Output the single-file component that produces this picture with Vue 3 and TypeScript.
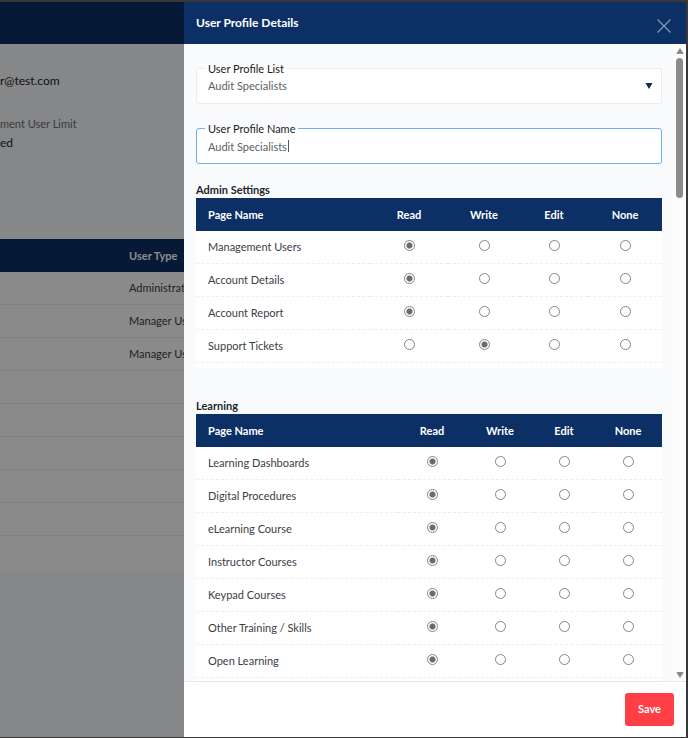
<script setup lang="ts">
import { reactive, ref } from 'vue'

type Access = 'Read' | 'Write' | 'Edit' | 'None'
interface Permission { page: string; access: Access }
interface Section { id: string; title: string; rows: Permission[] }

const levels: Access[] = ['Read', 'Write', 'Edit', 'None']
const profiles: string[] = ['Audit Specialists']
const selectedProfile = ref('Audit Specialists')
const profileName = ref('Audit Specialists')

const userTypes: string[] = ['Administrator', 'Manager User', 'Manager User', '', '', '', '', '', '']

const sections = reactive<Section[]>([
  {
    id: 'admin',
    title: 'Admin Settings',
    rows: [
      { page: 'Management Users', access: 'Read' },
      { page: 'Account Details', access: 'Read' },
      { page: 'Account Report', access: 'Read' },
      { page: 'Support Tickets', access: 'Write' },
    ],
  },
  {
    id: 'learning',
    title: 'Learning',
    rows: [
      { page: 'Learning Dashboards', access: 'Read' },
      { page: 'Digital Procedures', access: 'Read' },
      { page: 'eLearning Course', access: 'Read' },
      { page: 'Instructor Courses', access: 'Read' },
      { page: 'Keypad Courses', access: 'Read' },
      { page: 'Other Training / Skills', access: 'Read' },
      { page: 'Open Learning', access: 'Read' },
    ],
  },
])
</script>

<template>
  <div class="window">
    <main class="page">
      <div class="page-bar"></div>
      <div class="account">
        <p class="value email">r@test.com</p>
        <p class="caption">ment User Limit</p>
        <p class="value">ed</p>
      </div>
      <table class="users">
        <thead>
          <tr><th>User Type</th></tr>
        </thead>
        <tbody>
          <tr v-for="(type, i) in userTypes" :key="i"><td>{{ type }}</td></tr>
        </tbody>
      </table>
    </main>
    <div class="backdrop"></div>

    <aside class="drawer">
      <header class="drawer-head">
        <h1>User Profile Details</h1>
        <button class="close" type="button" aria-label="Close">
          <svg viewBox="0 0 14 14" width="14" height="14"><path d="M.5 .5 13.500 13.500M13.500 .5 .5 13.500" /></svg>
        </button>
      </header>

      <div class="middle">
        <div class="content">
          <div class="field">
            <label for="profile-list">User Profile List</label>
            <select id="profile-list" v-model="selectedProfile">
              <option v-for="p in profiles" :key="p">{{ p }}</option>
            </select>
            <svg class="arrow" viewBox="0 0 8 6" width="8" height="6"><path d="M0.500 0H7.500L4 6Z" /></svg>
          </div>
          <div class="field active">
            <label for="profile-name">User Profile Name</label>
            <input id="profile-name" v-model="profileName" type="text" />
            <span class="caret"></span>
          </div>

          <section v-for="section in sections" :key="section.id" class="group">
            <h2>{{ section.title }}</h2>
            <div class="sheet">
              <table class="perms" :class="section.id">
                <colgroup>
                  <col />
                  <col v-for="level in levels" :key="level" :class="level.toLowerCase()" />
                </colgroup>
                <thead>
                  <tr>
                    <th class="name">Page Name</th>
                    <th v-for="level in levels" :key="level">{{ level }}</th>
                  </tr>
                </thead>
                <tbody>
                  <tr v-for="row in section.rows" :key="row.page">
                    <td class="name">{{ row.page }}</td>
                    <td v-for="level in levels" :key="level">
                      <input
                        v-model="row.access"
                        type="radio"
                        :name="row.page"
                        :value="level"
                        :aria-label="`${row.page}: ${level}`"
                      />
                    </td>
                  </tr>
                </tbody>
              </table>
            </div>
          </section>
        </div>
        <div class="scrollbar" aria-hidden="true">
          <svg viewBox="0 0 8 6" width="8" height="6"><path d="M4 0 7 4.500Q8 6 7 6H1Q0 6 1 4.500Z" /></svg>
          <div class="track"><div class="thumb"></div></div>
          <svg viewBox="0 0 8 6" width="8" height="6"><path d="M4 6 7 1.500Q8 0 7 0H1Q0 0 1 1.500Z" /></svg>
        </div>
      </div>

      <footer class="drawer-foot">
        <button class="save" type="button">Save</button>
      </footer>
    </aside>
  </div>
</template>

<style>
body {
  margin: 0;
  background: #fff;
}
</style>

<style scoped>
* {
  box-sizing: border-box;
}
.window {
  position: relative;
  height: 100vh;
  overflow: hidden;
  border: solid #383838;
  border-width: 2px 2px 1px 0;
  font-family: Lato, "Liberation Sans", sans-serif;
  font-size: 11px;
  line-height: 16px;
  color: #3c4046;
}
h1, h2, p {
  margin: 0;
}
.page {
  height: 100%;
  background: #f8f9fb;
}
.page-bar {
  height: 42px;
  background: #0c3066;
}
.account {
  height: 195px;
  padding-top: 29px;
}
.value {
  font-size: 12px;
  color: #22262c;
}
.email {
  margin-bottom: 27px;
}
.caption {
  margin-bottom: 3px;
  color: #6c7078;
}
table {
  width: 100%;
  border-spacing: 0;
}
th {
  height: 33px;
  padding: 0;
  background: #0c3066;
  color: #fff;
  font-weight: 700;
}
td {
  height: 33px;
  padding: 0;
  text-align: center;
}
.users {
  background: #fff;
}
.users th,
.users td {
  padding-left: 129px;
  text-align: left;
}
.users td {
  border-bottom: 1px solid #eceef1;
}
.users tr:last-child td {
  height: 37px;
  border-bottom: 0;
}
.backdrop {
  position: absolute;
  inset: 0;
  background: rgba(0, 0, 0, 0.46);
}
.drawer {
  position: absolute;
  inset: 0 0 0 auto;
  width: min(100%, 502px);
  display: flex;
  flex-direction: column;
  background: #f9fafc;
}
.drawer-head {
  display: flex;
  justify-content: space-between;
  height: 42px;
  flex: none;
  padding: 12px 15px 0 12px;
  background: #0c3066;
}
h1 {
  font-size: 12px;
  line-height: 18px;
  font-weight: 700;
  color: #fff;
}
.close {
  display: flex;
  align-self: flex-start;
  margin-top: 5px;
  padding: 0;
  border: 0;
  background: none;
}
.close path {
  fill: none;
  stroke: #8598b5;
  stroke-width: 1.2;
}
.middle {
  flex: 1;
  min-height: 0;
  display: flex;
}
.content {
  flex: 1;
  overflow-y: auto;
  scrollbar-width: none;
  padding: 24px 11px 0 12px;
}
.field {
  position: relative;
  height: 36px;
  margin-bottom: 24px;
}
.field.active {
  margin-bottom: 18px;
}
.field label {
  position: absolute;
  top: -7px;
  left: 9px;
  padding: 0 3px;
  background: linear-gradient(#f9fafc 50%, #fff 50%);
  color: #1d2126;
}
.field select,
.field input {
  display: block;
  width: 100%;
  height: 100%;
  margin: 0;
  padding: 0 11px;
  border: 1px solid #eaecf1;
  border-radius: 3px;
  background: #fff;
  color: #5a5e66;
  font: inherit;
  appearance: none;
  outline: 0;
}
.field.active input {
  border-color: #6fb0f5;
}
.arrow {
  position: absolute;
  top: 15px;
  right: 9px;
  fill: #0c2a5c;
  pointer-events: none;
}
.caret {
  position: absolute;
  top: 12px;
  left: 92px;
  width: 1px;
  height: 12px;
  background: #555;
}
.group {
  margin-bottom: 30px;
}
.group h2 {
  height: 16px;
  font-size: 11px;
  line-height: 16px;
  font-weight: 700;
  color: #22262c;
}
.sheet {
  padding-bottom: 5px;
  background: #fff;
}
.perms {
  table-layout: fixed;
}
.perms .name {
  padding-left: 12px;
  text-align: left;
}
.perms td {
  border-bottom: 1px dashed #eceef2;
}
.admin .read { width: 78px; }
.admin .write { width: 72px; }
.admin .edit { width: 68px; }
.admin .none { width: 74px; }
.learning .read,
.learning .write,
.learning .none { width: 68px; }
.learning .edit { width: 60px; }
.perms input {
  display: block;
  width: 11px;
  height: 11px;
  margin: 0 auto 3px;
  border: 1px solid #858585;
  border-radius: 50%;
  background: #fff;
  appearance: none;
}
.perms input:checked {
  background: radial-gradient(circle closest-side, #6b6b6b 55%, #fff 80%);
}
.scrollbar {
  width: 13px;
  display: flex;
  flex-direction: column;
  align-items: center;
  gap: 4px;
  padding: 4px 0 3px;
  background: #fcfcfd;
  fill: #8b8b8b;
}
.scrollbar svg {
  flex: none;
}
.track {
  flex: 1;
}
.thumb {
  width: 7px;
  height: 23%;
  border-radius: 4px;
  background: #8b8b8b;
}
.drawer-foot {
  flex: none;
  display: flex;
  justify-content: flex-end;
  padding: 11px 12px;
  border-top: 1px solid #e6eaef;
  background: #fff;
}
.save {
  height: 33px;
  padding: 0 13px 2px;
  border: 0;
  border-radius: 3px;
  background: #ff3e45;
  color: #fff;
  font: inherit;
  font-weight: 700;
}
</style>
